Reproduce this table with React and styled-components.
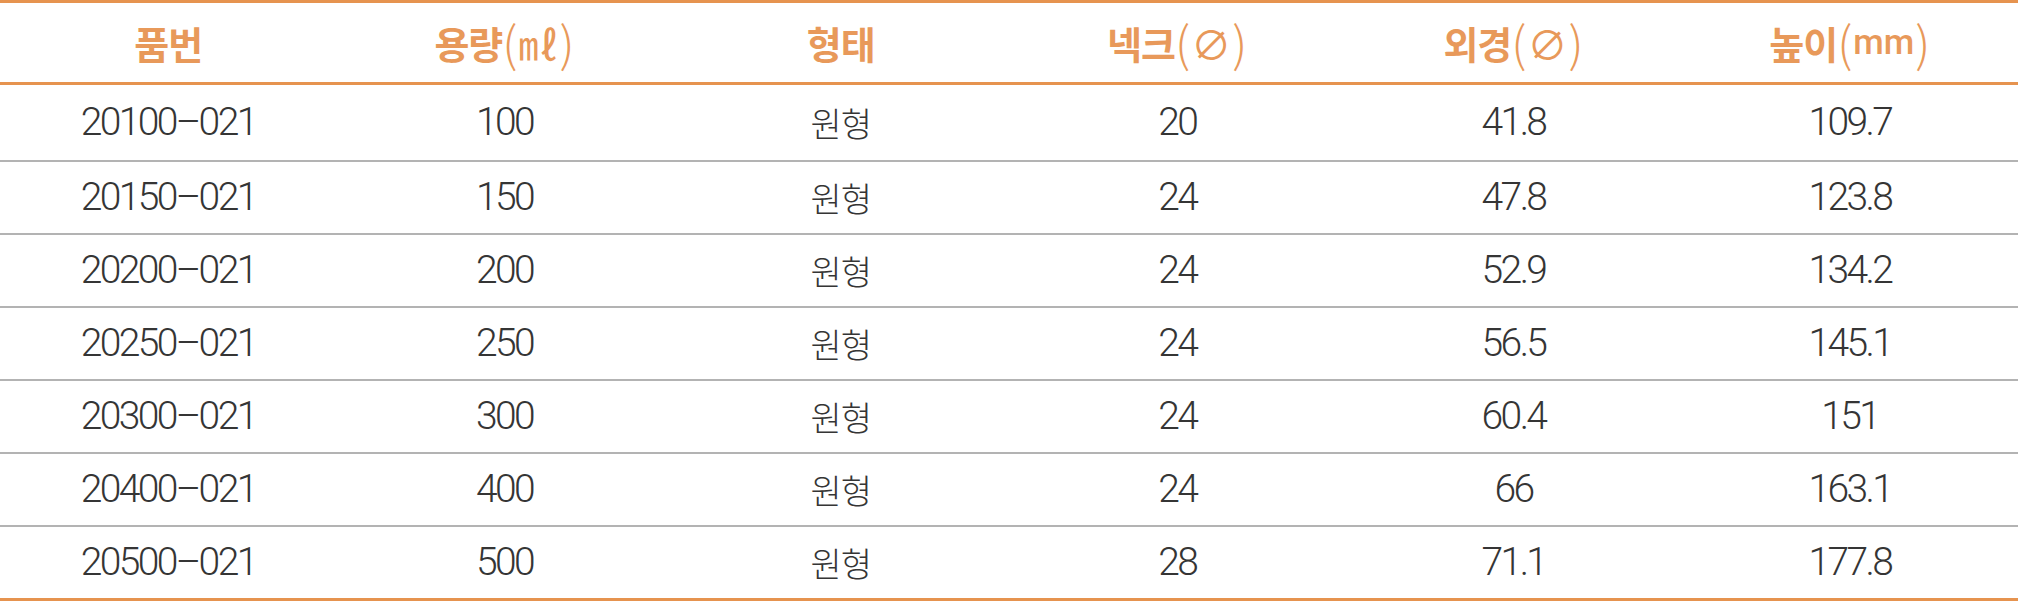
import React from "react";
import styled, { createGlobalStyle } from "styled-components";

const Global = createGlobalStyle`
  html, body { margin: 0; padding: 0; background: #fff; }
  body { font-family: "Roboto", "Noto Sans CJK KR", sans-serif; }
`;

const ORANGE = "#e6934f";

const Table = styled.div`
  width: 2018px;
  display: flex;
  flex-direction: column;
`;

const HeaderRow = styled.div`
  display: grid;
  grid-template-columns: repeat(6, 1fr);
  align-items: center;
  height: 79px;
  border-top: 3px solid ${ORANGE};
  border-bottom: 3px solid ${ORANGE};
`;

const HeadCell = styled.div`
  text-align: center;
  font-family: "Noto Sans CJK KR", sans-serif;
  font-weight: 700;
  font-size: 38px;
  letter-spacing: -1px;
  color: #e8995a;
  line-height: 1;
  display: flex;
  justify-content: center;
  align-items: center;
`;

const Paren = styled.span`
  font-family: "Noto Sans CJK KR", sans-serif;
  font-weight: 300;
  font-size: 48px;
  letter-spacing: 0;
  line-height: 1;
  transform: translateY(-2px);
`;

const UnitInner = styled.span`
  font-weight: ${(p) => (p.$bold ? 500 : 400)};
  font-family: ${(p) => (p.$latin ? '"Roboto", sans-serif' : '"Noto Sans CJK KR", sans-serif')};
  font-size: ${(p) => (p.$latin ? "35px" : "40px")};
  letter-spacing: 0;
  margin: 0 1px;
`;

const BodyRow = styled.div`
  display: grid;
  grid-template-columns: repeat(6, 1fr);
  align-items: center;
  height: ${(p) => (p.$first ? 75 : 71)}px;
  border-bottom: ${(p) => (p.$last ? `3px solid ${ORANGE}` : "2px solid #b3b3b3")};
`;

const Cell = styled.div`
  text-align: center;
  color: #353535;
  line-height: 1;
  font-family: ${(p) => (p.$kr ? '"Noto Sans CJK KR", sans-serif' : '"Roboto", sans-serif')};
  font-size: ${(p) => (p.$kr ? "34px" : "39px")};
  letter-spacing: ${(p) => (p.$kr ? "-1px" : "-2.6px")};
  font-weight: ${(p) => (p.$kr ? 300 : 300)};
`;

const Unit = ({ children, latin }) => (
  <>
    <Paren>(</Paren>
    <UnitInner $latin={latin} $bold={latin}>{children}</UnitInner>
    <Paren>)</Paren>
  </>
);

const rows = [
  ["20100–021", "100", "원형", "20", "41.8", "109.7"],
  ["20150–021", "150", "원형", "24", "47.8", "123.8"],
  ["20200–021", "200", "원형", "24", "52.9", "134.2"],
  ["20250–021", "250", "원형", "24", "56.5", "145.1"],
  ["20300–021", "300", "원형", "24", "60.4", "151"],
  ["20400–021", "400", "원형", "24", "66", "163.1"],
  ["20500–021", "500", "원형", "28", "71.1", "177.8"],
];

export default function App() {
  return (
    <>
      <Global />
      <Table>
        <HeaderRow>
          <HeadCell>품번</HeadCell>
          <HeadCell>
            용량<Unit>㎖</Unit>
          </HeadCell>
          <HeadCell>형태</HeadCell>
          <HeadCell>
            넥크<Unit>∅</Unit>
          </HeadCell>
          <HeadCell>
            외경<Unit>∅</Unit>
          </HeadCell>
          <HeadCell>
            높이<Unit latin>mm</Unit>
          </HeadCell>
        </HeaderRow>
        {rows.map((r, i) => (
          <BodyRow key={i} $first={i === 0} $last={i === rows.length - 1}>
            {r.map((v, j) => (
              <Cell key={j} $kr={j === 2}>
                {v}
              </Cell>
            ))}
          </BodyRow>
        ))}
      </Table>
    </>
  );
}
